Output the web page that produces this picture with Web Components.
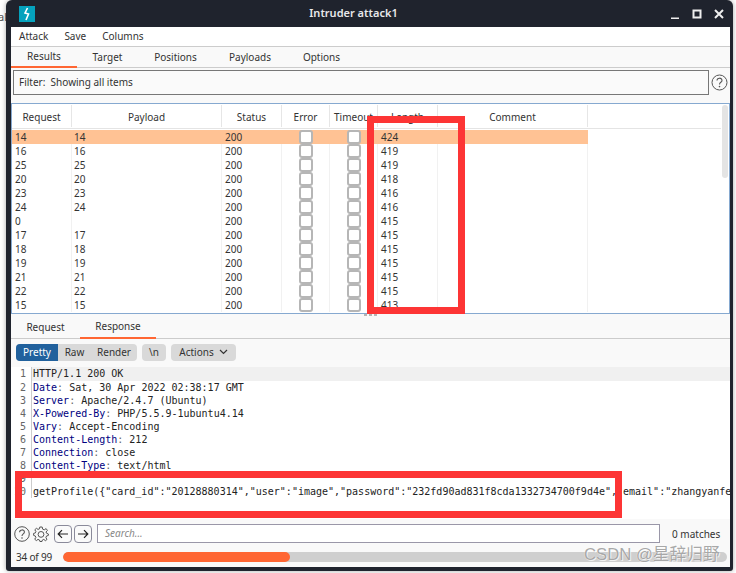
<!DOCTYPE html>
<html>
<head>
<meta charset="utf-8">
<title>Intruder attack1</title>
<style>
  html, body { margin: 0; padding: 0; height: 573px; overflow: hidden; background: #fff; }
  body { position: relative; font: 10px "Noto Sans", "Liberation Sans", sans-serif; color: #333; }
  .behind { position: absolute; left: -2px; top: 9px; font-size: 11px; color: #555; }
</style>
</head>
<body>
<span class="behind">al</span>
<burp-window>
  <title-bar slot="title">Intruder attack1</title-bar>
  <menu-bar></menu-bar>
  <tab-strip items="Results,Target,Positions,Payloads,Options" widths="66,61,75,74,69" active="0" variant="main"></tab-strip>
  <filter-bar>Filter:&nbsp; Showing all items</filter-bar>
  <results-table></results-table>
  <split-dots></split-dots>
  <tab-strip items="Request,Response" widths="69,76" active="1" variant="sub"></tab-strip>
  <view-toolbar></view-toolbar>
  <message-editor></message-editor>
  <search-bar></search-bar>
  <progress-bar></progress-bar>
</burp-window>
<red-box style="left:367px;top:116px;width:84px;height:184px"></red-box>
<red-box style="left:15px;top:471px;width:593px;height:33px"></red-box>
<water-mark>CSDN @星辞归野</water-mark>

<script>
class BurpWindow extends HTMLElement {
  constructor() {
    super();
    this.attachShadow({mode: "open"}).innerHTML = `
    <style>
      :host {
        display: flex; flex-direction: column;
        position: absolute; left: 6px; top: 0;
        box-sizing: border-box; width: 727px; height: 571px;
        padding: 0 3px 4px 5px;
        background: #1f232d; border-radius: 6px 6px 3px 3px;
        box-shadow: 0 0 5px rgba(0,0,0,.35);
      }
      .body { display: flex; flex-direction: column; flex: 1; min-height: 0; background: #f9f9f9; }
    </style>
    <slot name="title"></slot>
    <div class="body"><slot></slot></div>`;
  }
}

class TitleBar extends HTMLElement {
  constructor() {
    super();
    this.attachShadow({mode: "open"}).innerHTML = `
    <style>
      :host {
        display: flex; align-items: center; position: relative;
        height: 27px; flex: none; color: #e8e8ea;
        font: 600 11px "Noto Sans", sans-serif;
      }
      .logo { width: 16px; height: 16px; margin-left: 8px; background: #05a2bd; display: flex; align-items: center; justify-content: center; }
      .name { position: absolute; left: 0; right: 34px; top: 5px; text-align: center; }
      .btns { margin-left: auto; display: flex; align-items: center; gap: 12px; margin-right: 6px; }
      svg { display: block; }
    </style>
    <div class="logo">
      <svg width="10" height="14" viewBox="0 0 10 14"><path d="M5.5 1 L3 6 L6.5 7 L4 13" fill="none" stroke="#fff" stroke-width="1.6"/></svg>
    </div>
    <div class="name"><slot></slot></div>
    <div class="btns">
      <svg width="10" height="10" viewBox="0 0 10 10"><path d="M1 9.5H9" stroke="#eee" stroke-width="2"/></svg>
      <svg width="10" height="10" viewBox="0 0 10 10"><rect x="1.5" y="1.5" width="7" height="7" fill="none" stroke="#eee" stroke-width="2"/></svg>
      <svg width="10" height="10" viewBox="0 0 10 10"><path d="M1 1L9 9M9 1L1 9" stroke="#eee" stroke-width="2"/></svg>
    </div>`;
  }
}

class MenuBar extends HTMLElement {
  constructor() {
    super();
    this.attachShadow({mode: "open"}).innerHTML = `
    <style>
      :host {
        display: flex; align-items: center; flex: none; gap: 16px;
        box-sizing: border-box; height: 20px; padding: 0 0 1px 8px;
        background: #fff; border-bottom: 1px solid #ccc;
        font: 10px "Noto Sans", sans-serif; color: #333;
      }
    </style>
    <span>Attack</span><span>Save</span><span>Columns</span>`;
  }
}

class TabStrip extends HTMLElement {
  connectedCallback() {
    const names = this.getAttribute("items").split(",");
    const widths = this.getAttribute("widths").split(",");
    const active = +this.getAttribute("active");
    const h = this.getAttribute("variant") == "sub" ? 23 : 21;
    const root = this.attachShadow({mode: "open"});
    root.innerHTML = `
    <style>
      :host {
        display: flex; flex: none; box-sizing: border-box;
        height: ${h}px;
        border-bottom: 1px solid #ccc;
        font: 10px "Noto Sans", sans-serif; color: #333;
      }
      .t { display: flex; align-items: center; justify-content: center; box-sizing: border-box; height: ${h}px; padding-bottom: 1px; }
      .on { border-bottom: 2px solid #ff6633; }
    </style>
    ${names.map((n, i) => `<div class="t ${i == active ? "on" : ""}" style="width:${widths[i]}px">${n}</div>`).join("")}`;
  }
}

class FilterBar extends HTMLElement {
  constructor() {
    super();
    this.attachShadow({mode: "open"}).innerHTML = `
    <style>
      :host {
        display: flex; align-items: flex-start; flex: none; gap: 2px;
        box-sizing: border-box; height: 35px; padding: 2px 2px 0 2px;
        font: 10px "Noto Sans", sans-serif; color: #333;
      }
      .box {
        flex: 1; box-sizing: border-box; height: 25px; line-height: 23px;
        padding-left: 5px; border: 1px solid #777; background: #fafafa;
      }
      svg { display: block; margin-top: 4px; }
    </style>
    <div class="box"><slot></slot></div>
    <svg width="17" height="17" viewBox="0 0 17 17">
      <circle cx="8.5" cy="8.5" r="7.5" fill="none" stroke="#555" stroke-width="1"/>
      <path d="M6 6.6C6 3.4 11 3.4 11 6.4C11 8.4 8.5 8.2 8.5 10.4" fill="none" stroke="#555" stroke-width="1.1"/>
      <circle cx="8.5" cy="12.6" r=".8" fill="#555"/>
    </svg>`;
  }
}

const ROWS = [
  [14, 14, 424], [16, 16, 419], [25, 25, 419], [20, 20, 418], [23, 23, 416], [24, 24, 416],
  [0, "", 415], [17, 17, 415], [18, 18, 415], [19, 19, 415], [21, 21, 415], [22, 22, 415], [15, 15, 413]
];

class ResultsTable extends HTMLElement {
  constructor() {
    super();
    const cols = "grid-template-columns: 60px 150px 60px 48px 48px 60px 150px";
    const heads = ["Request", "Payload", "Status", "Error", "Timeout", "Length", "Comment"];
    const line = x => `linear-gradient(#f1f1f1,#f1f1f1) ${x}px 0/1px 100% no-repeat`;
    const rows = ROWS.map((r, i) => `
      <div class="row ${i == 0 ? "sel" : ""}">
        <div class="c">${r[0]}</div>
        <div class="c pay">${r[1]}</div>
        <div class="c">200</div>
        <div class="c ck"><i></i></div>
        <div class="c ck"><i></i></div>
        <div class="c">${r[2]}</div>
        <div class="c"></div>
      </div>`).join("");
    this.attachShadow({mode: "open"}).innerHTML = `
    <style>
      :host {
        display: block; position: relative; flex: none; overflow: hidden;
        box-sizing: border-box; height: 211px;
        border: 1px solid #86a9d0; background: #fff;
        font: 10px "Noto Sans", sans-serif; color: #333;
      }
      .head { display: grid; ${cols}; height: 24px; margin-bottom: 1px; border-bottom: 1px solid #e4e4e4; margin-right: 8px; background: #fff; }
      .head div { display: flex; align-items: center; justify-content: center; border-right: 1px solid #e6e6e6; margin: 1px 0; padding-top: 1px; white-space: nowrap; overflow: hidden; }
      .rows { position: relative; background: ${[59, 209, 269, 317, 365, 425, 575].map(line).join(",")}; }
      .row { display: grid; ${cols}; height: 14px; width: 576px; }
      .sel { background: #ffc294; }
      .c { padding-left: 3px; line-height: 14px; color: #333; }
      .pay { padding-left: 2px; }
      .ck { padding: 0; display: flex; justify-content: center; }
      .ck i { display: block; box-sizing: border-box; width: 14px; height: 14px; background: #fff; border: 2px solid #b6b6b6; border-radius: 3px; }
      .bar { position: absolute; right: 1px; top: 1px; width: 6px; height: 73px; background: #e4e4e4; border-radius: 3px; }
    </style>
    <div class="head">${heads.map(h => `<div>${h}</div>`).join("")}</div>
    <div class="rows">${rows}</div>
    <div class="bar"></div>`;
  }
}

class SplitDots extends HTMLElement {
  constructor() {
    super();
    this.attachShadow({mode: "open"}).innerHTML = `
    <style>
      :host { display: flex; justify-content: center; gap: 2px; flex: none; height: 2px; }
      i { width: 3px; height: 2px; background: #b4b4b4; }
    </style>
    <i></i><i></i><i></i>`;
  }
}

class ViewToolbar extends HTMLElement {
  constructor() {
    super();
    this.attachShadow({mode: "open"}).innerHTML = `
    <style>
      :host {
        display: flex; flex: none; align-items: flex-start; gap: 5px;
        box-sizing: border-box; height: 28px; padding: 5px 0 0 5px;
        font: 10px "Noto Sans", sans-serif; color: #333;
      }
      .g { display: flex; height: 17px; background: #d9d9d9; border-radius: 4px; overflow: hidden; line-height: 17px; }
      .g span { display: block; text-align: center; }
      .on { background: #21619d; color: #fff; }
      svg { display: inline-block; vertical-align: 1px; margin-left: 5px; }
    </style>
    <div class="g">
      <span class="on" style="width:42px">Pretty</span>
      <span style="width:33px">Raw</span>
      <span style="width:46px">Render</span>
    </div>
    <div class="g"><span style="width:24px">\\n</span></div>
    <div class="g"><span style="width:65px">Actions<svg width="9" height="6" viewBox="0 0 9 6"><path d="M1 1L4.5 4.5L8 1" fill="none" stroke="#333" stroke-width="1.2"/></svg></span></div>`;
  }
}

const LINES = [
  ["", "HTTP/1.1 200 OK"],
  ["Date", " Sat, 30 Apr 2022 02:38:17 GMT"],
  ["Server", " Apache/2.4.7 (Ubuntu)"],
  ["X-Powered-By", " PHP/5.5.9-1ubuntu4.14"],
  ["Vary", " Accept-Encoding"],
  ["Content-Length", " 212"],
  ["Connection", " close"],
  ["Content-Type", " text/html"],
  ["", ""],
  ["", 'getProfile({"card_id":"20128880314","user":"image","password":"232fd90ad831f8cda1332734700f9d4e","email":"zhangyanfe']
];

class MessageEditor extends HTMLElement {
  constructor() {
    super();
    const rows = LINES.map((l, i) => `
      <div class="ln ${i == 0 ? "cur" : ""}">
        <span class="no">${i + 1}</span>
        <span class="tx">${l[0] ? `<b>${l[0]}</b><u>:</u>` : ""}${l[1]}</span>
      </div>`).join("");
    this.attachShadow({mode: "open"}).innerHTML = `
    <style>
      :host {
        display: block; flex: none; overflow: hidden; box-sizing: border-box;
        height: 152px; background: #fff;
        font: 10px/13px "DejaVu Sans Mono", "Liberation Mono", monospace; color: #222;
      }
      .ln { display: flex; height: 13px; white-space: pre; }
      .cur { height: 14px; background: #f0f0f0; line-height: 14px; }
      .no { flex: none; box-sizing: border-box; width: 21px; padding-right: 5px; text-align: right; color: #666; background: #fff; border-right: 1px solid #ccc; }
      .tx { padding-left: 1px; }
      b { font-weight: normal; color: #000080; }
      u { text-decoration: none; color: #666; }
    </style>
    ${rows}`;
  }
}

class SearchBar extends HTMLElement {
  constructor() {
    super();
    this.attachShadow({mode: "open"}).innerHTML = `
    <style>
      :host {
        display: flex; flex: none; align-items: center;
        box-sizing: border-box; height: 29px; padding: 0 0 0 3px;
        font: 10px "Noto Sans", sans-serif; color: #333;
      }
      svg { display: block; flex: none; }
      .nav { box-sizing: border-box; width: 18px; height: 18px; margin-left: 2px; border: 1px solid #8a8a9a; border-radius: 4px; display: flex; align-items: center; justify-content: center; background: #fafafa; }
      .gear { margin-left: 3px; margin-right: 3px; }
      .inp { flex: none; box-sizing: border-box; width: 563px; height: 19px; margin-left: 5px; padding-left: 7px; line-height: 17px; border: 1px solid #9a97a8; background: #fff; color: #888; font-style: italic; }
      .m { margin-left: 12px; }
    </style>
    <svg width="16" height="16" viewBox="0 0 16 16">
      <circle cx="8" cy="8" r="7.3" fill="none" stroke="#555"/>
      <path d="M5.6 6.2C5.6 3.2 10.4 3.2 10.4 6C10.4 7.9 8 7.8 8 10" fill="none" stroke="#555" stroke-width="1.1"/>
      <circle cx="8" cy="12" r=".8" fill="#555"/>
    </svg>
    <svg class="gear" width="16" height="16" viewBox="0 0 16 16">
      <path d="M6.8 1H9.2L9.6 3.1L11.3 3.8L13.1 2.6L14.4 4.4L13 6L13.5 7.2L15.4 8V9.4L13.5 10L12.9 11.7L14 13.4L12.4 14.7L10.8 13.4L9.3 14.1L9 15.5H6.9L6.5 14L5 13.4L3.4 14.6L1.7 13.2L2.9 11.5L2.3 10L.6 9.4V7.4L2.4 6.9L2.9 5.4L1.8 3.8L3.4 2.3L5 3.4L6.5 2.8Z" fill="none" stroke="#555"/>
      <circle cx="8" cy="8.4" r="2.9" fill="none" stroke="#555"/>
    </svg>
    <div class="nav"><svg width="12" height="10" viewBox="0 0 12 10"><path d="M11 5H1.5M5 1.2L1.2 5L5 8.8" fill="none" stroke="#222" stroke-width="1.2"/></svg></div>
    <div class="nav"><svg width="12" height="10" viewBox="0 0 12 10"><path d="M1 5H10.5M7 1.2L10.8 5L7 8.8" fill="none" stroke="#222" stroke-width="1.2"/></svg></div>
    <div class="inp">Search...</div>
    <div class="m">0 matches</div>`;
  }
}

class ProgressBar extends HTMLElement {
  constructor() {
    super();
    this.attachShadow({mode: "open"}).innerHTML = `
    <style>
      :host {
        display: flex; flex: none; align-items: center; gap: 11px;
        box-sizing: border-box; height: 18px; padding: 0 3px 1px 5px;
        font: 10px "Noto Sans", sans-serif; color: #333;
      }
      span { flex: none; width: 36px; white-space: nowrap; letter-spacing: -.2px; }
      .track { flex: 1; height: 10px; border-radius: 5px; background: #cfcfcf; overflow: hidden; }
      .fill { width: 227px; height: 10px; border-radius: 5px; background: #ff6633; }
    </style>
    <span>34 of 99</span>
    <div class="track"><div class="fill"></div></div>`;
  }
}

class RedBox extends HTMLElement {
  constructor() {
    super();
    this.attachShadow({mode: "open"}).innerHTML = `
    <style>
      :host { display: block; position: absolute; border: 7px solid #fd3535; pointer-events: none; }
    </style>`;
  }
}

class WaterMark extends HTMLElement {
  constructor() {
    super();
    this.attachShadow({mode: "open"}).innerHTML = `
    <style>
      :host {
        display: block; position: absolute; left: 584px; top: 545px;
        font: 16.7px/20px "Liberation Sans", "Noto Sans CJK SC", sans-serif;
        color: rgba(130,130,130,.7); white-space: nowrap;
        text-shadow: 0 0 1px #fff, 1px 1px 0 rgba(255,255,255,.7);
      }
    </style>
    <slot></slot>`;
  }
}

customElements.define("burp-window", BurpWindow);
customElements.define("title-bar", TitleBar);
customElements.define("menu-bar", MenuBar);
customElements.define("tab-strip", TabStrip);
customElements.define("filter-bar", FilterBar);
customElements.define("results-table", ResultsTable);
customElements.define("split-dots", SplitDots);
customElements.define("view-toolbar", ViewToolbar);
customElements.define("message-editor", MessageEditor);
customElements.define("search-bar", SearchBar);
customElements.define("progress-bar", ProgressBar);
customElements.define("red-box", RedBox);
customElements.define("water-mark", WaterMark);
</script>
</body>
</html>
